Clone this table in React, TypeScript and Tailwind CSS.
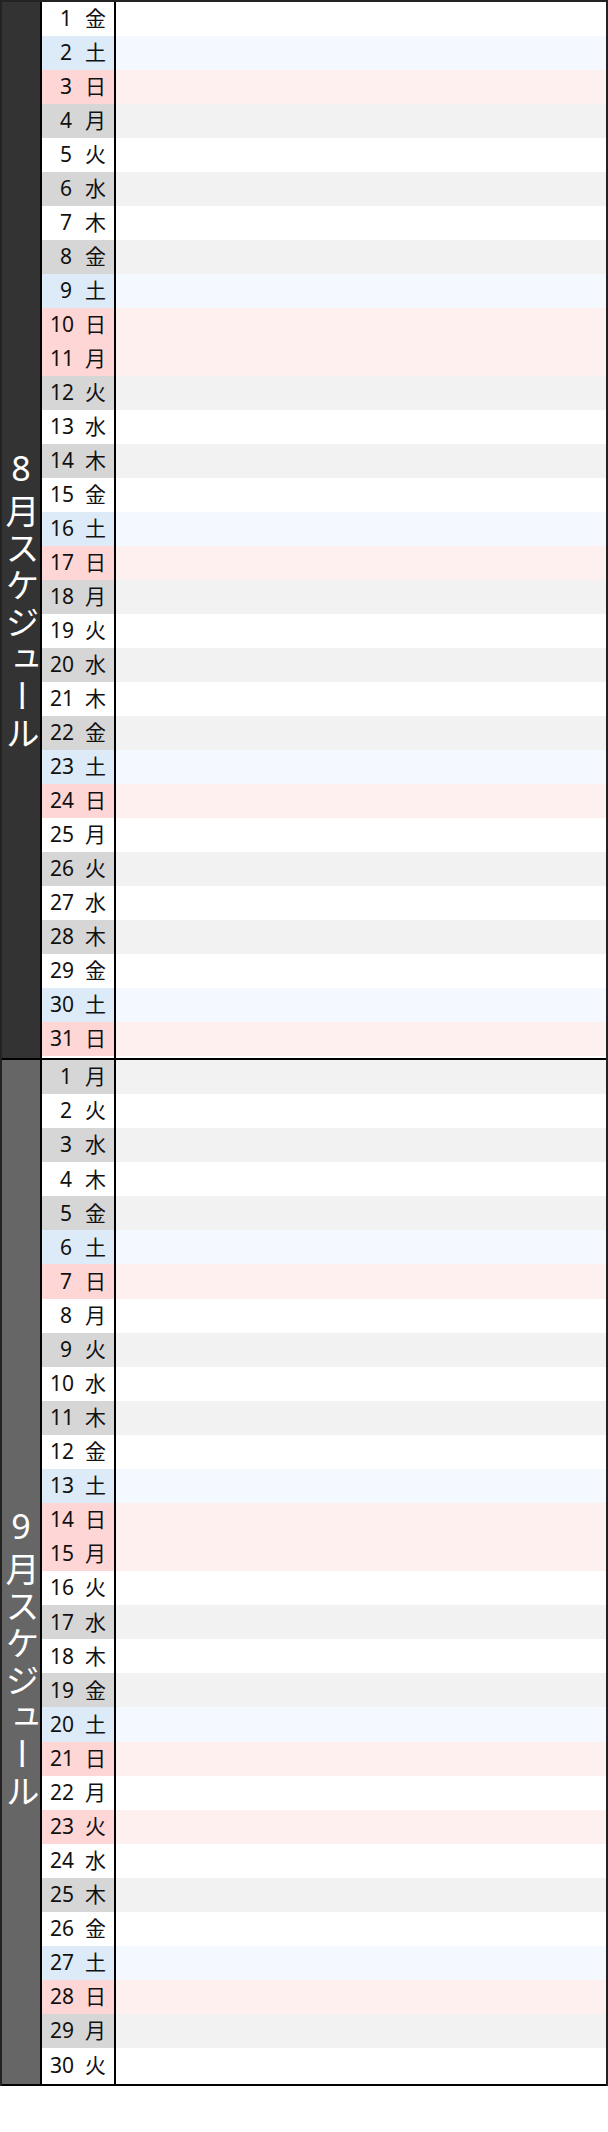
import React from 'react';

const WEEK = ['日', '月', '火', '水', '木', '金', '土'];
const HOLIDAYS = ['8-11', '9-15', '9-23'];

type Kind = 'sat' | 'sun' | 'gray' | 'white';

const dateCellColor: Record<Kind, string> = {
  sat: 'bg-[#dcebf7]',
  sun: 'bg-[#ffd6d6]',
  gray: 'bg-[#d6d6d6]',
  white: 'bg-white'
};

const dataCellColor: Record<Kind, string> = {
  sat: 'bg-[#f3f9ff]',
  sun: 'bg-[#fff0f0]',
  gray: 'bg-[#f2f2f2]',
  white: 'bg-white'
};

type Day = { day: number; week: string; kind: Kind };

const buildMonth = (year: number, month: number, offset: number): Day[] => {
  const count = new Date(year, month, 0).getDate();
  const days: Day[] = [];
  for (let d = 1; d <= count; d++) {
    const w = new Date(year, month - 1, d).getDay();
    let kind: Kind = (offset + d) % 2 === 0 ? 'gray' : 'white';
    if (w === 6) kind = 'sat';
    if (w === 0 || HOLIDAYS.includes(`${month}-${d}`)) kind = 'sun';
    days.push({ day: d, week: WEEK[w], kind });
  }
  return days;
};

const MonthBlock = ({ month, days, label, rowH }: { month: number; days: Day[]; label: string; rowH: string }) => (
  <div className="flex border-b-2 border-black">
    <div className={`w-[38px] shrink-0 flex justify-center pt-[443px] ${label}`}>
      <span className="text-white text-[34px] leading-[38px] tracking-[3px] [writing-mode:vertical-rl] [text-orientation:upright]">
        {month}月スケジュール
      </span>
    </div>
    <div className="w-[76px] shrink-0 border-l-2 border-r-2 border-black pb-[2px] bg-white">
      {days.map((d) => (
        <div key={d.day} className={`${rowH} flex items-center pl-[8px] text-[21px] text-[#111] ${dateCellColor[d.kind]}`}>
          <span className="w-[22px] text-right">{d.day}</span>
          <span className="ml-[13px]">{d.week}</span>
        </div>
      ))}
    </div>
    <div className="flex-1 pb-[2px] bg-white">
      {days.map((d) => (
        <div key={d.day} className={`${rowH} ${dataCellColor[d.kind]}`} />
      ))}
    </div>
  </div>
);

export default function App() {
  const august = buildMonth(2025, 8, 0);
  const september = buildMonth(2025, 9, august.length);

  return (
    <div className="w-[608px] min-h-[2132px] bg-white font-['Noto_Sans','Noto_Sans_CJK_JP',sans-serif]">
      <div className="border-t-2 border-x-2 border-[#222]">
        <MonthBlock month={8} days={august} label="bg-[#333]" rowH="h-[34px]" />
        <MonthBlock month={9} days={september} label="bg-[#666]" rowH="h-[34.08px]" />
      </div>
    </div>
  );
}
